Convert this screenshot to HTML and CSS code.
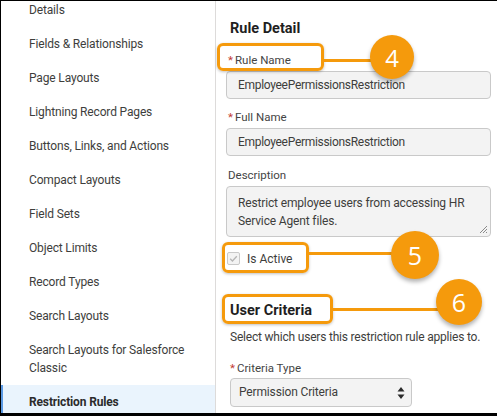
FILE: index.html
```html
<!DOCTYPE html>
<html>
<head>
<meta charset="utf-8">
<link rel="stylesheet" href="styles.css">
</head>
<body>
<div class="frame">
  <nav class="sidebar">
    <ul class="nav-list">
      <li class="nav-item">Details</li>
      <li class="nav-item">Fields &amp; Relationships</li>
      <li class="nav-item">Page Layouts</li>
      <li class="nav-item">Lightning Record Pages</li>
      <li class="nav-item">Buttons, Links, and Actions</li>
      <li class="nav-item">Compact Layouts</li>
      <li class="nav-item">Field Sets</li>
      <li class="nav-item">Object Limits</li>
      <li class="nav-item">Record Types</li>
      <li class="nav-item">Search Layouts</li>
      <li class="nav-item">Search Layouts for Salesforce Classic</li>
      <li class="nav-item active">Restriction Rules</li>
    </ul>
  </nav>
  <main class="main">
    <h2 class="section-title">Rule Detail</h2>
    <div class="field f-name">
      <label class="label"><span class="req">*</span>Rule Name</label>
      <div class="input">EmployeePermissionsRestriction</div>
    </div>
    <div class="field f-full">
      <label class="label"><span class="req">*</span>Full Name</label>
      <div class="input">EmployeePermissionsRestriction</div>
    </div>
    <div class="field f-desc">
      <label class="label">Description</label>
      <div class="textarea">Restrict employee users from accessing HR Service Agent files.
        <svg class="grip" width="9" height="9" viewBox="0 0 9 9"><path d="M8 1L1 8M8 4L4 8M8 7L7 8" stroke="#8a8a8a" stroke-width="1" fill="none"/></svg>
      </div>
    </div>
    <div class="check-row">
      <span class="checkbox"><svg width="11" height="11" viewBox="0 0 11 11"><path d="M2.2 5.8L4.4 8L8.8 3.2" stroke="#b5b5b5" stroke-width="1.3" fill="none"/></svg></span>
      <span class="check-label">Is Active</span>
    </div>
    <h2 class="section-title criteria">User Criteria</h2>
    <p class="help">Select which users this restriction rule applies to.</p>
    <div class="field f-type">
      <label class="label"><span class="req">*</span>Criteria Type</label>
      <div class="select">Permission Criteria
        <svg class="arrows" width="8" height="14" viewBox="0 0 8 14"><path d="M4 1L7.5 5.5H0.5Z M4 13L0.5 8.5H7.5Z" fill="#2b2b2b"/></svg>
      </div>
    </div>

    <div class="hl hl-4"></div>
    <div class="hl hl-5"></div>
    <div class="hl hl-6"></div>
    <div class="conn conn-4"></div>
    <div class="conn conn-5"></div>
    <div class="conn conn-6"></div>
    <div class="badge badge-4">4</div>
    <div class="badge badge-5">5</div>
    <div class="badge badge-6">6</div>
  </main>
</div>
</body>
</html>
```
FILE: styles.css
```css
* { box-sizing: border-box; }
html, body { margin: 0; padding: 0; background: #fff; }
body {
  font-family: Roboto, "Liberation Sans", sans-serif;
  color: #3e3e3c;
  font-size: 12px;
}
.frame {
  width: 497px;
  height: 416px;
  border-top: 1px solid #000;
  border-left: 1px solid #000;
  border-bottom: 3px solid #000;
  display: flex;
  overflow: hidden;
}
.sidebar {
  width: 215px;
  flex: none;
  border-right: 1px solid #dddbda;
  overflow: hidden;
}
.nav-list {
  list-style: none;
  margin: -8px 0 0 0;
  padding: 0;
}
.nav-item {
  padding: 8px 12px 8px 28px;
  line-height: 18px;
  font-size: 12px;
  letter-spacing: -0.15px;
  color: #3e3e3c;
}
.nav-item.active {
  background: #eaf4fd;
  border-left: 2px solid #5b9ae4;
  padding-left: 26px;
  font-weight: 700;
  color: #2b2b2b;
}
.main {
  flex: 1;
  position: relative;
  padding: 17px 6px 0 10px;
}
.section-title {
  margin: 0 0 0 4px;
  font-size: 14.5px;
  font-weight: 700;
  line-height: 22px;
  color: #1f1f1f;
}
.label {
  display: block;
  font-size: 11.5px;
  line-height: 18px;
  color: #444;
  margin-left: 2px;
}
.req { color: #c23934; margin-right: 2px; }
.f-name { margin-top: 11px; }
.f-full { margin-top: 9px; }
.f-desc { margin-top: 10px; }
.input, .textarea, .select {
  background: #f3f3f3;
  border: 1px solid #c9c9c9;
  border-radius: 4px;
  color: #3e3e3c;
  font-size: 12px;
  letter-spacing: -0.15px;
}
.input {
  height: 28px;
  line-height: 26px;
  padding-left: 11px;
  margin-top: 2px;
  letter-spacing: -0.3px;
}
.textarea {
  position: relative;
  height: 51px;
  margin-top: 2px;
  padding: 7px 8px 0 11px;
  line-height: 18px;
}
.grip { position: absolute; right: 2px; bottom: 2px; }
.check-row {
  display: flex;
  align-items: center;
  margin-top: 15px;
  margin-left: 1px;
  height: 13px;
}
.checkbox {
  width: 13px;
  height: 13px;
  border: 1px solid #c9c9c9;
  border-radius: 2px;
  background: #f3f3f3;
  display: flex;
  align-items: center;
  justify-content: center;
}
.check-label { margin-left: 7px; font-size: 12px; color: #3e3e3c; }
.section-title.criteria { margin-top: 35px; }
.help {
  margin: 6px 0 0 4px;
  font-size: 12px;
  letter-spacing: -0.2px;
  line-height: 18px;
  color: #3e3e3c;
}
.f-type { margin-top: 13px; }
.f-type .label { margin-left: 4px; }
.select {
  position: relative;
  width: 182px;
  height: 29px;
  line-height: 27px;
  margin: 1px 0 0 4px;
  padding-left: 8px;
}
.arrows { position: absolute; right: 6px; top: 7px; }

.hl {
  position: absolute;
  border: 3px solid #f59a0c;
  border-radius: 6px;
  box-shadow: 0 1px 3px rgba(0,0,0,0.25);
}
.hl-4 { left: 1px; top: 42px; width: 107px; height: 28px; }
.hl-5 { left: 6px; top: 241px; width: 87px; height: 31px; }
.hl-6 { left: 6px; top: 293px; width: 111px; height: 30px; }
.conn {
  position: absolute;
  height: 3px;
  background: #f59a0c;
}
.conn-4 { left: 107px; top: 58px; width: 60px; }
.conn-5 { left: 92px; top: 251px; width: 100px; }
.conn-6 { left: 116px; top: 307px; width: 110px; }
.badge {
  position: absolute;
  border-radius: 50%;
  background: #f59a0c;
  color: #fff;
  font-family: "Open Sans", sans-serif;
  display: flex;
  align-items: center;
  justify-content: center;
  box-shadow: 0 3px 4px rgba(0,0,0,0.3);
}
.badge-4 { left: 154px; top: 34px; width: 44px; height: 44px; font-size: 24px; }
.badge-5 { left: 175px; top: 230px; width: 48px; height: 48px; font-size: 25px; }
.badge-6 { left: 220px; top: 278px; width: 46px; height: 46px; font-size: 25px; }
```
